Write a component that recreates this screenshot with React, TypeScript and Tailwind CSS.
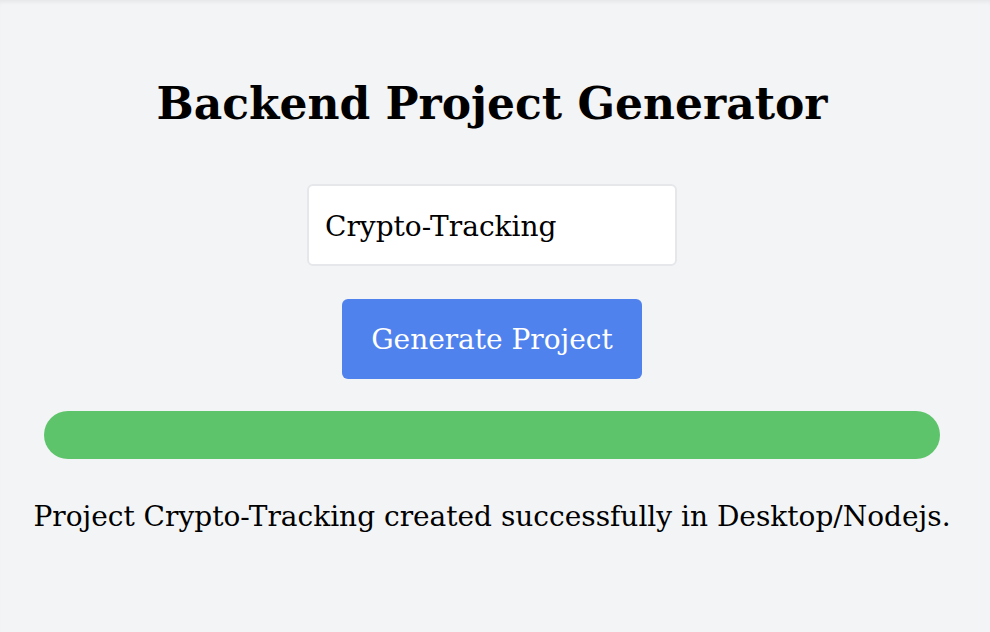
export default function App() {
  return (
    <div
      className="min-h-[632px] w-full bg-[#f3f4f6] shadow-[inset_0_4px_4px_-2px_rgba(0,0,0,0.06)] pr-[6px]"
      style={{ fontFamily: '"DejaVu Serif", "Liberation Serif", serif' }}
    >
      <div className="flex flex-col items-center pt-[78px] px-[44px]">
        <h1 className="text-[44px] leading-[52px] font-bold text-black whitespace-nowrap">Backend Project Generator</h1>
        <input
          readOnly
          value="Crypto-Tracking"
          className="mt-[54px] w-[370px] h-[82px] bg-white border-2 border-[#e5e7eb] rounded-[6px] px-[16px] pt-[2px] text-[28px] text-black outline-none"
          style={{ fontFamily: '"DejaVu Serif", "Liberation Serif", serif' }}
        />
        <button
          className="mt-[33px] w-[300px] h-[80px] bg-[#5082ee] rounded-[6px] text-white text-[28px] pt-[2px]"
          style={{ fontFamily: '"DejaVu Serif", "Liberation Serif", serif' }}
        >
          Generate Project
        </button>
        <div className="mt-[32px] w-full h-[48px] rounded-full bg-[#5ec46b]" />
        <p className="mt-[40px] text-[28px] leading-[36px] text-black whitespace-nowrap">
          Project Crypto-Tracking created successfully in Desktop/Nodejs.
        </p>
      </div>
    </div>
  );
}
